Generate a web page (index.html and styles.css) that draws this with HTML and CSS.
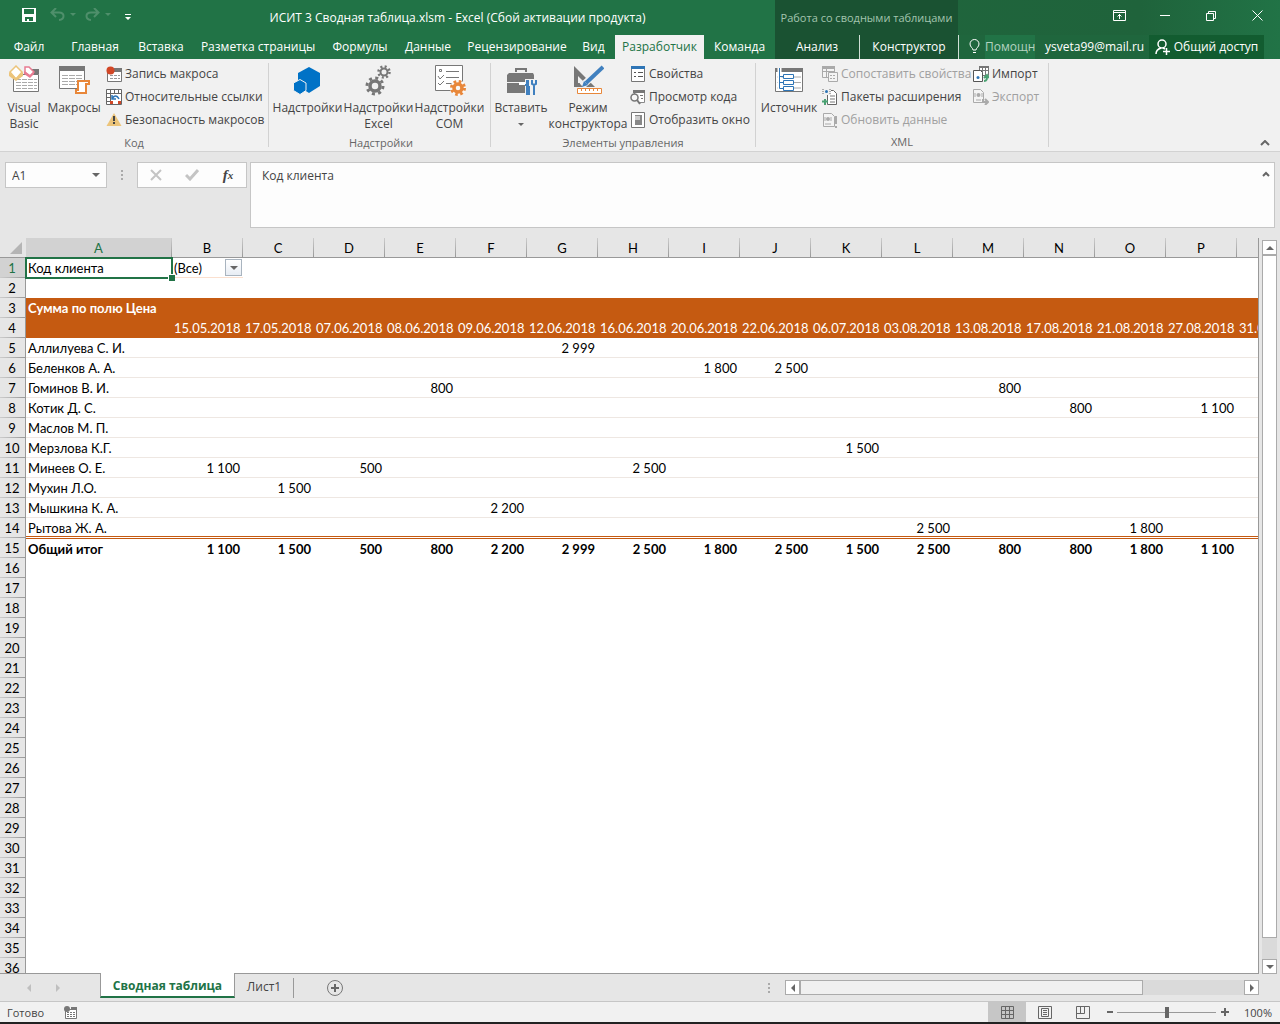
FILE: index.html
```html
<!DOCTYPE html>
<html lang="ru">
<head>
  <meta charset="utf-8">
  <title>ИСИТ 3 Сводная таблица.xlsm - Excel</title>
  <link rel="stylesheet" href="styles.css">
</head>
<body>
  <header class="titlebar">
    <div class="quick">
      <button class="icon-btn save" aria-label="Сохранить">
        <svg width="14" height="14" viewBox="0 0 14 14"><path fill="#fff" fill-rule="evenodd" d="M0 0h14v14H0zM2 1v5h10V1zM3 9v4h2v-2h2v2h4V9z"/></svg>
      </button>
      <button class="icon-btn undo" aria-label="Отменить">
        <svg width="26" height="14" viewBox="0 0 26 14"><path fill="none" stroke="#4f8f6b" stroke-width="2" d="M6 0 1.500 4.500 6 9M2 4.500h7c6 0 6 7 0 7.500"/><path fill="#4f8f6b" d="M20 5h6l-3 3z"/></svg>
      </button>
      <button class="icon-btn redo" aria-label="Вернуть">
        <svg width="26" height="14" viewBox="0 0 26 14"><path fill="none" stroke="#4f8f6b" stroke-width="2" d="M9 0l4.500 4.500L9 9M13 4.500H6c-6 0-6 7 0 7.500"/><path fill="#4f8f6b" d="M20 5h6l-3 3z"/></svg>
      </button>
      <button class="icon-btn more" aria-label="Настройка панели">
        <svg width="6" height="7" viewBox="0 0 6 7"><path fill="#fff" d="M0 0h6v1H0zM0 3h6L3 6z"/></svg>
      </button>
    </div>
    <h1>ИСИТ 3 Сводная таблица.xlsm - Excel (Сбой активации продукта)</h1>
    <div class="context-title">Работа со сводными таблицами</div>
    <div class="window-buttons">
      <button class="icon-btn" aria-label="Параметры ленты">
        <svg width="13" height="11" viewBox="0 0 13 11"><path fill="none" stroke="#fff" d="M.5.5h12v10H.5zM0 2.500h13M6.500 9V4M4.500 6.500l2-2 2 2"/></svg>
      </button>
      <button class="icon-btn" aria-label="Свернуть">
        <svg width="11" height="11" viewBox="0 0 11 11"><path stroke="#fff" d="M0 5.500h10"/></svg>
      </button>
      <button class="icon-btn" aria-label="Восстановить">
        <svg width="10" height="10" viewBox="0 0 10 10"><path fill="none" stroke="#fff" d="M.5 2.500h7v7h-7zM2.500 2V.5h7v7H8"/></svg>
      </button>
      <button class="icon-btn" aria-label="Закрыть">
        <svg width="11" height="11" viewBox="0 0 11 11"><path stroke="#fff" d="M.5.5l10 10M10.500.5l-10 10"/></svg>
      </button>
    </div>
  </header>

  <nav class="tabs">
    <button>Файл</button>
    <button>Главная</button>
    <button>Вставка</button>
    <button>Разметка страницы</button>
    <button>Формулы</button>
    <button>Данные</button>
    <button>Рецензирование</button>
    <button>Вид</button>
    <button class="active">Разработчик</button>
    <button>Команда</button>
    <button class="context">Анализ</button>
    <button class="context">Конструктор</button>
    <label class="tell-me">
      <svg width="12" height="16" viewBox="0 0 12 16"><path fill="none" stroke="#fff" d="M4 11c0-2-3-3-3-6a4.500 4.500 0 0 1 9 0c0 3-3 4-3 6zM4 13.500h3"/></svg>
      <input type="text" placeholder="Помощник">
    </label>
    <a href="#" class="account">ysveta99@mail.ru</a>
    <button class="share">
      <svg width="15" height="16" viewBox="0 0 15 16"><circle cx="7" cy="5" r="4" fill="none" stroke="#fff" stroke-width="1.500"/><path fill="none" stroke="#fff" stroke-width="1.500" d="M1 15c0-3 2-5 5-6M8 9l2 1M8 12.500h7M11.500 9v7"/></svg>
      Общий доступ
    </button>
  </nav>

  <section class="ribbon">
    <div class="group group-code">
      <div class="tools">
        <button class="big">
          <svg width="32" height="32" viewBox="0 0 32 32"><path fill="#fff" stroke="#777" d="M5.500 10.500h25v17h-25z"/><path fill="#777" d="M24 5h7v5h-7z"/><path stroke="#aaa" stroke-dasharray="5 1" d="M8 15.500h21M8 18.500h21M8 21.500h21M8 24.500h21"/><path fill="#fff" stroke="#ecc47a" stroke-width="1.500" d="M8 2l6 6-6 7-6-7z"/><path fill="#ecc47a" d="M1 8l7 6 7-6v4l-7 5-7-5z"/><path fill="#fff" stroke="#e87b91" stroke-width="1.500" d="M17 3h4l5 5-4 4-5-4z"/><path fill="#e87b91" d="M16 7l6 4 4-4v3l-4 4-6-4z"/></svg>
          <span>Visual<br>Basic</span>
        </button>
        <button class="big">
          <svg width="32" height="32" viewBox="0 0 32 32"><path fill="#fff" stroke="#777" d="M1.500 2.500h25v22h-25z"/><path fill="#777" d="M1 2h26v5H1z"/><path stroke="#aaa" stroke-dasharray="6 1" d="M4 11.500h20M4 14.500h20M4 17.500h20M4 20.500h20"/><path fill="#fff" stroke="#e8873a" stroke-width="2" d="M20 17h11v3h-3v9H18v-3h2z"/></svg>
          <span>Макросы</span>
        </button>
        <div class="stack">
          <button class="small"><svg width="16" height="16" viewBox="0 0 16 16"><path fill="#fff" stroke="#777" d="M1.500 4.500h14v11h-14z"/><path fill="#777" d="M8 2h8v4H8z"/><path stroke="#999" stroke-dasharray="3 1" d="M4 9.500h10M4 12.500h10"/><circle cx="4.500" cy="4.500" r="4" fill="#d24726"/></svg>Запись макроса</button>
          <button class="small"><svg width="16" height="16" viewBox="0 0 16 16"><path fill="#fff" stroke="#666" d="M.5.5h15v15H.5zM0 4.500h16M4.500 0v16M8.500 0v4M12.500 0v4M0 8.500h4M0 12.500h4"/><path fill="#fff" d="M5 5h10v7H5z"/><path fill="#d24726" d="M4 12h3v3H4zM12 12h3v3h-3z"/><path fill="none" stroke="#2e75b6" stroke-width="1.500" d="M6 6v4h4M6 10c2-4 5-4 7 0"/></svg>Относительные ссылки</button>
          <button class="small"><svg width="16" height="16" viewBox="0 0 16 16"><path fill="#ecc47a" d="M8 1l7.500 13H.5z"/><path fill="#444" d="M7 4h2v5H7zM7 10h2v2H7z"/></svg>Безопасность макросов</button>
        </div>
      </div>
      <h2>Код</h2>
    </div>

    <div class="group group-addins">
      <div class="tools">
        <button class="big">
          <svg width="32" height="32" viewBox="0 0 32 32"><path fill="#0072c6" d="M17 3l11 6v13l-11 7-11-7V9z"/><path fill="#0072c6" stroke="#f1f1f1" d="M8 15.500l6 3.500v7.500l-6 4-6.500-4V19z"/></svg>
          <span>Надстройки</span>
        </button>
        <button class="big">
          <svg width="32" height="32" viewBox="0 0 32 32"><g fill="none" stroke="#777"><circle cx="12" cy="22" r="5" stroke-width="3.500"/><circle cx="12" cy="22" r="8" stroke-width="3" stroke-dasharray="3 3.280"/><circle cx="21" cy="8" r="3.500" stroke-width="2"/><circle cx="21" cy="8" r="5.500" stroke-width="2.500" stroke-dasharray="2 2.320"/></g></svg>
          <span>Надстройки<br>Excel</span>
        </button>
        <button class="big">
          <svg width="32" height="32" viewBox="0 0 32 32"><path fill="#fff" stroke="#777" d="M1.500 1.500h27v25h-27z"/><path fill="none" stroke="#777" d="M5.500 5.500h2v2h-2zM12 7.500h13M12 13.500h13M12 19.500h6M4 12l2 3 4-4M4 19l2 2 4-4"/><circle cx="24" cy="24" r="8" fill="#f8f8f8"/><g fill="none" stroke="#e8873a"><circle cx="24" cy="24" r="4" stroke-width="3.500"/><circle cx="24" cy="24" r="6.500" stroke-width="3" stroke-dasharray="2.600 2.500"/></g></svg>
          <span>Надстройки<br>COM</span>
        </button>
      </div>
      <h2>Надстройки</h2>
    </div>

    <div class="group group-controls">
      <div class="tools">
        <button class="big">
          <svg width="32" height="32" viewBox="0 0 32 32"><path fill="none" stroke="#777" stroke-width="2" d="M11 8V5h10v3"/><path fill="#777" d="M4 9h24l1 2v7H2v-7zM2 19h13v2h5v-2h9v10H2z"/><path fill="#fff" d="M14 18h6v3h-6z"/><path fill="#f1f1f1" d="M20 15h12v17H20z"/><path fill="#777" d="M20 11h9v4h-9z"/><path fill="#4080bf" d="M21 16h3v6h1v9h-4v-9h-1v-2h1z"/><path fill="none" stroke="#4080bf" stroke-width="2" d="M27 16v4l2 1 2-1v-4M29 20v11"/></svg>
          <span>Вставить<br><i class="caret"></i></span>
        </button>
        <button class="big">
          <svg width="32" height="32" viewBox="0 0 32 32"><path fill="#777" fill-rule="evenodd" d="M2 2l21 21H2zM6 12v7h7z"/><path stroke="#f1f1f1" stroke-width="7" d="M10 22L30 4"/><path stroke="#4080bf" stroke-width="4" d="M14 19L31 3"/><path fill="#4080bf" d="M10 23l2-6 4 4z"/><path fill="#fff" stroke="#e8873a" d="M5.500 24.500h24v5h-24zM9.500 25v2M13.500 25v2M17.500 25v2M21.500 25v2M25.500 25v2"/></svg>
          <span>Режим<br>конструктора</span>
        </button>
        <div class="stack">
          <button class="small"><svg width="16" height="16" viewBox="0 0 16 16"><path fill="#fff" stroke="#777" d="M1.500.5h13v15h-13z"/><path fill="#2e75b6" d="M1 0h14v3H1z"/><path fill="none" stroke="#555" d="M4 6.500h2M4 10.500h2M8 6.500h5M8 10.500h5"/></svg>Свойства</button>
          <button class="small"><svg width="16" height="16" viewBox="0 0 16 16"><path fill="#fff" stroke="#888" d="M4.500 1.500h10v12h-10z"/><path fill="#777" d="M3 1h12v3H3z"/><path fill="#f1f1f1" d="M0 5h9v9H0z"/><path stroke="#777" d="M10 6.500h3M11 9.500h2"/><circle cx="4.500" cy="8.500" r="3.500" fill="#f8f8f8" stroke="#777" stroke-width="1.500"/><path stroke="#777" stroke-width="2" d="M7 11l3 4"/></svg>Просмотр кода</button>
          <button class="small"><svg width="16" height="16" viewBox="0 0 16 16"><path fill="#fff" stroke="#777" d="M1.500.5h13v15h-13z"/><path fill="#888" d="M5 3h7v10H5z"/><path fill="#ccc" d="M5 4h5v4H5z"/></svg>Отобразить окно</button>
        </div>
      </div>
      <h2>Элементы управления</h2>
    </div>

    <div class="group group-xml">
      <div class="tools">
        <button class="big">
          <svg width="32" height="32" viewBox="0 0 32 32"><path fill="#fff" stroke="#777" d="M2.500 4.500h27v23h-27z"/><path fill="#777" d="M2 4h28v4H2z"/><path stroke="#aaa" d="M4 13h24M4 18.500h24M4 24h24"/><path stroke="#fff" stroke-width="4" d="M6.500 4v23"/><path fill="#fff" stroke="#2e75b6" d="M6.500 4v20.500H10M6.500 12.500H10M6.500 18.500H10M10.500 10.500h10v4h-10zM10.500 16.500h10v4h-10zM10.500 22.500h10v4h-10z"/></svg>
          <span>Источник</span>
        </button>
        <div class="stack stack-wide">
          <button class="small" disabled><svg width="16" height="16" viewBox="0 0 16 16"><path fill="#f4f4f4" stroke="#aaa" d="M.5.5h12v11H.5zM0 5.500h12M4.500 3v8"/><path fill="#aaa" d="M0 0h13v3H0z"/><path fill="#f4f4f4" stroke="#aaa" d="M6.500 6.500h9v9h-9z"/><path stroke="#aaa" stroke-dasharray="2 1" d="M8 9.500h6M8 12.500h6"/></svg>Сопоставить свойства</button>
          <button class="small"><svg width="16" height="16" viewBox="0 0 16 16"><path fill="#fff" stroke="#666" d="M5.500 1.500h6l3 3v11h-9z"/><path stroke="#777" d="M8 7h5M8 10h5M8 13h5"/><path fill="#f1f1f1" d="M0 0h9v6H0z"/><circle cx="4.500" cy="2.500" r="1.500" fill="#2e75b6"/><path fill="none" stroke="#666" stroke-dasharray="1 1" d="M1 0v5M8 0v5"/><path stroke="#4ba173" stroke-width="2" d="M0 12.500h6M3 10v6"/></svg>Пакеты расширения</button>
          <button class="small" disabled><svg width="16" height="16" viewBox="0 0 16 16"><path fill="#f4f4f4" stroke="#aaa" d="M1.500 1.500h8l3 3v10h-11z"/><circle cx="6" cy="7" r="2" fill="#aaa"/><path fill="none" stroke="#aaa" d="M3 5v4M9 5v4M3 12h6"/><path stroke="#aaa" stroke-width="2" d="M14 4v8M14 14v2"/></svg>Обновить данные</button>
        </div>
        <div class="stack">
          <button class="small"><svg width="16" height="16" viewBox="0 0 16 16"><path fill="#fff" stroke="#777" d="M6.500.5h9v9h-9zM6 4.500h10M9.500 1v8M12.500 1v8"/><path fill="#777" d="M6 0h10v2H6z"/><path fill="#fff" stroke="#555" d="M.5 4.500h7l2 2v9h-9z"/><circle cx="5" cy="11.500" r="1.500" fill="#2e75b6"/><path fill="none" stroke="#4ba173" stroke-width="2" d="M11 15c3 0 3-2 3-5M11 12l3-3 2 3"/></svg>Импорт</button>
          <button class="small" disabled><svg width="16" height="16" viewBox="0 0 16 16"><path fill="#f4f4f4" stroke="#aaa" d="M.5.5h7l3 3v10H.5z"/><circle cx="5.500" cy="6" r="2" fill="#aaa"/><path fill="none" stroke="#aaa" d="M2 4v4M9 4v4M3 11h5"/><path fill="none" stroke="#aaa" stroke-width="2" d="M10 10v3h5M12 10l3 3-3 3"/></svg>Экспорт</button>
        </div>
      </div>
      <h2>XML</h2>
    </div>
    <button class="icon-btn collapse" aria-label="Свернуть ленту">
      <svg width="10" height="6" viewBox="0 0 10 6"><path fill="none" stroke="#666" stroke-width="2" d="M1 5l4-4 4 4"/></svg>
    </button>
  </section>

  <section class="formula-bar">
    <div class="name-box">
      <input type="text" value="A1" aria-label="Имя">
      <button class="icon-btn" aria-label="Список имён"><i class="caret"></i></button>
    </div>
    <i class="dots"></i>
    <div class="formula-buttons">
      <button class="icon-btn" aria-label="Отмена"><svg width="12" height="12" viewBox="0 0 12 12"><path stroke="#c4c4c4" stroke-width="2" d="M1 1l10 10M11 1L1 11"/></svg></button>
      <button class="icon-btn" aria-label="Ввод"><svg width="14" height="12" viewBox="0 0 14 12"><path fill="none" stroke="#c4c4c4" stroke-width="3" d="M1 6l4 4 8-9"/></svg></button>
      <button class="icon-btn fx" aria-label="Вставить функцию"><i>f</i><sub>x</sub></button>
    </div>
    <div class="formula-box">
      <textarea aria-label="Строка формул">Код клиента</textarea>
      <button class="icon-btn" aria-label="Свернуть строку формул"><svg width="8" height="6" viewBox="0 0 8 6"><path fill="none" stroke="#666" stroke-width="2" d="M1 5l3-3 3 3"/></svg></button>
    </div>
  </section>

  <main class="workspace">
    <div class="sheet">
      <table id="grid"></table>
    </div>
    <div class="vscroll">
      <button aria-label="Вверх"><i class="arrow up"></i></button>
      <div class="thumb"></div>
      <button aria-label="Вниз"><i class="arrow down"></i></button>
    </div>
  </main>

  <div class="sheet-bar">
    <div class="sheet-nav">
      <i class="arrow left"></i>
      <i class="arrow right"></i>
    </div>
    <button class="sheet-tab active">Сводная таблица</button>
    <button class="sheet-tab">Лист1</button>
    <button class="icon-btn add" aria-label="Новый лист">
      <svg width="16" height="16" viewBox="0 0 16 16"><circle cx="8" cy="8" r="7.500" fill="none" stroke="#777"/><path stroke="#666" stroke-width="2" d="M4 8h8M8 4v8"/></svg>
    </button>
    <i class="dots"></i>
    <div class="hscroll">
      <button aria-label="Влево"><i class="arrow left"></i></button>
      <div class="thumb"></div>
      <button aria-label="Вправо"><i class="arrow right"></i></button>
    </div>
  </div>

  <footer class="status">
    <span class="ready">Готово</span>
    <svg width="13" height="13" viewBox="0 0 13 13"><path fill="#fff" stroke="#777" d="M1.500 3.500h11v9h-11z"/><path fill="#777" d="M7 1h6v3H7z"/><path stroke="#777" stroke-dasharray="2 1" d="M3 6.500h8M3 8.500h8M3 10.500h8"/><circle cx="3" cy="3" r="3" fill="#777"/></svg>
    <div class="views">
      <button class="active" aria-label="Обычный"><svg width="13" height="13" viewBox="0 0 13 13"><path fill="none" stroke="#666" d="M.5.5h12v12H.5zM4.500 0v13M8.500 0v13M0 4.500h13M0 8.500h13"/></svg></button>
      <button aria-label="Разметка страницы"><svg width="14" height="13" viewBox="0 0 14 13"><path fill="none" stroke="#666" d="M.5.5h13v12H.5zM3.500 2.500h7v8h-7zM5 4.500h4M5 6.500h4M5 8.500h4"/></svg></button>
      <button aria-label="Страничный"><svg width="14" height="13" viewBox="0 0 14 13"><path fill="none" stroke="#666" d="M.5.5h13v12H.5zM.5 7.500h8V0M4.500 0v7"/></svg></button>
    </div>
    <button class="icon-btn zoom-btn" aria-label="Уменьшить"><svg width="8" height="8" viewBox="0 0 8 8"><path stroke="#666" stroke-width="2" d="M1 4h6"/></svg></button>
    <input type="range" min="0" max="200" value="100" aria-label="Масштаб">
    <button class="icon-btn zoom-btn" aria-label="Увеличить"><svg width="8" height="8" viewBox="0 0 8 8"><path stroke="#666" stroke-width="2" d="M0 4h8M4 0v8"/></svg></button>
    <span class="percent">100%</span>
  </footer>
  <script src="script.js"></script>
</body>
</html>
```
FILE: styles.css
```css
* {
  box-sizing: border-box;
}
body {
  margin: 0;
  height: 100vh;
  display: flex;
  flex-direction: column;
  overflow: hidden;
  background: #e6e6e6;
  border-bottom: 2px solid #222;
  font: 12px "Open Sans", "Noto Sans", sans-serif;
  color: #444;
}
button, input, textarea {
  font: inherit;
  color: inherit;
  background: none;
  border: none;
  padding: 0;
  margin: 0;
  outline: none;
  white-space: nowrap;
}
svg {
  display: block;
  flex: none;
}
.icon-btn {
  display: flex;
  align-items: center;
  justify-content: center;
}
.caret {
  display: inline-block;
  border: 4px solid transparent;
  border-top-color: #666;
  border-bottom: none;
}

/* title bar and tabs */
.titlebar {
  display: grid;
  grid-template-columns: 140px 635px 183px 1fr;
  height: 35px;
  color: #fff;
  background: linear-gradient(to right, #217346 775px, #1f663d 775px, #1f633b 1140px, #217346);
}
.quick {
  display: flex;
  align-items: center;
  padding: 0 0 6px 22px;
}
.quick .undo {
  margin-left: 14px;
}
.quick .redo {
  margin-left: 9px;
}
.quick .more {
  margin: 4px 0 0 14px;
}
h1 {
  margin: 0;
  font-size: 12px;
  font-weight: normal;
  line-height: 36px;
  text-align: center;
  white-space: nowrap;
}
.context-title {
  background: #1a5232;
  color: #a3c5af;
  font-size: 11px;
  line-height: 36px;
  text-align: center;
  white-space: nowrap;
}
.window-buttons {
  display: flex;
  justify-content: flex-end;
  padding: 0 0 5px;
}
.window-buttons button {
  width: 46px;
}
.tabs {
  display: grid;
  grid-template-columns: 58px 74px 58px 136px 68px 68px 110px 43px 89px 71px 85px 99px 77px 1fr 115px 16px;
  height: 24px;
  color: #fff;
  background: linear-gradient(to right, #217346 775px, #1f663d 775px, #1f663d 1140px, #217346);
}
.tabs button {
  padding-bottom: 1px;
}
.tabs .active {
  color: #217346;
  background: #f1f1f1;
}
.tabs .context {
  background: #1a5232;
  border-right: 1px solid #d0dfd6;
}
.tell-me {
  display: flex;
  align-items: center;
  gap: 4px;
  padding-left: 10px;
}
.tell-me input {
  width: 50px;
  height: 24px;
  padding-bottom: 1px;
  background: #217346;
}
.tell-me input::placeholder {
  color: #b5d2c0;
}
.account {
  color: #fff;
  text-decoration: none;
  line-height: 23px;
  padding-left: 9px;
}
.share {
  display: flex;
  align-items: center;
  justify-content: center;
  gap: 4px;
  background: #125c30;
}

/* ribbon */
.ribbon {
  display: flex;
  height: 93px;
  background: #f1f1f1;
  border-bottom: 1px solid #d2d2d2;
}
.group {
  display: flex;
  flex-direction: column;
  margin: 4px 0;
  border-right: 1px solid #d2d2d2;
}
.group-code {
  width: 269px;
}
.group-addins {
  width: 222px;
  padding-left: 3px;
}
.group-controls {
  width: 265px;
}
.group-xml {
  width: 293px;
}
.group h2 {
  margin: 0;
  font-size: 11px;
  font-weight: normal;
  line-height: 16px;
  text-align: center;
  color: #666;
}
.tools {
  display: flex;
  height: 72px;
  margin: -1px 0 3px;
}
.big {
  display: flex;
  flex-direction: column;
  align-items: center;
  width: 71px;
  padding-top: 2px;
  line-height: 16px;
}
.big span {
  margin-top: 4px;
}
.big .caret {
  border-width: 3px;
  border-bottom: none;
  vertical-align: middle;
}
.group-code .big {
  width: 48px;
}
.group-code .big + .big {
  width: 52px;
}
.group-code .stack {
  margin-left: 6px;
}
.group-controls .big {
  width: 60px;
}
.group-controls .big + .big {
  width: 74px;
}
.group-controls .stack {
  margin-left: 5px;
}
.group-xml .big {
  width: 66px;
}
.stack-wide {
  width: 151px;
}
.small {
  display: flex;
  align-items: center;
  gap: 3px;
  height: 23px;
}
.small:disabled {
  color: #a0a0a0;
}
.collapse {
  align-self: flex-end;
  margin: 0 10px 5px auto;
}

/* formula bar */
.formula-bar {
  display: flex;
  align-items: flex-start;
  padding: 10px 5px;
  height: 86px;
}
.name-box, .formula-buttons, .formula-box {
  display: flex;
  background: #fdfdfd;
  border: 1px solid #c6c6c6;
  height: 26px;
}
.name-box {
  width: 102px;
}
.name-box input {
  width: 86px;
  padding-left: 6px;
}
.dots {
  width: 2px;
  height: 10px;
  background: repeating-linear-gradient(#aaa 0 2px, transparent 2px 4px);
}
.formula-bar .dots {
  margin: 8px 14px 0;
}
.formula-buttons {
  width: 110px;
  margin-right: 3px;
}
.formula-buttons button {
  flex: 1;
}
.fx {
  font: bold 15px "Liberation Serif", serif;
}
.fx sub {
  font-size: 11px;
  font-style: italic;
}
.formula-box {
  flex: 1;
  height: 66px;
}
.formula-box textarea {
  flex: 1;
  resize: none;
  padding: 4px 11px;
}
.formula-box button {
  width: 16px;
  height: 22px;
}

/* worksheet */
.workspace {
  flex: 1;
  display: flex;
  min-height: 0;
}
.sheet {
  flex: 1;
  min-width: 0;
  overflow: hidden;
  background: linear-gradient(#e6e6e6 19px, #fff 19px);
  border-right: 1px solid #999;
  border-bottom: 1px solid #999;
}
table {
  table-layout: fixed;
  width: 0;
  border-collapse: separate;
  border-spacing: 0;
  font: 13px Lato, "Open Sans", sans-serif;
  color: #000;
}
td, th {
  height: 20px;
  padding: 0 3px 0 2px;
  line-height: 18px;
  white-space: nowrap;
  text-align: right;
  font-weight: normal;
}
thead th {
  background: linear-gradient(#ccc, #999) right / 1px 100% no-repeat #e6e6e6;
  border-bottom: 1px solid #999;
  text-align: center;
}
thead th.selected {
  background-color: #d2d2d2;
  border-bottom-color: #217346;
  color: #217346;
}
tbody th {
  background: linear-gradient(to right, #ccc, #999) bottom / 100% 1px no-repeat #e6e6e6;
  border-right: 1px solid #999;
  text-align: center;
}
tbody th.selected {
  background-color: #d2d2d2;
  color: #217346;
}
thead th.corner {
  position: relative;
  background: #e6e6e6;
}
.corner::after {
  content: "";
  position: absolute;
  right: 4px;
  bottom: 3px;
  border: 6px solid transparent;
  border-right-color: #b5b5b5;
  border-bottom-color: #b5b5b5;
}
td.label {
  text-align: left;
}
.band td {
  background: #c55a11;
  color: #fff;
}
.data td {
  border-bottom: 1px solid #eee7e2;
}
/* double rule above the totals: one line on each side of the row edge */
.last td {
  background: linear-gradient(#c55a11, #c55a11) 0 18px / 100% 1px no-repeat;
}
.total td {
  border-top: 1px solid #c55a11;
}
.strong td {
  font-weight: bold;
}
td.cursor {
  position: relative;
}
.cursor::before {
  content: "";
  position: absolute;
  inset: -1px;
  border: 2px solid #217346;
}
.cursor::after {
  content: "";
  position: absolute;
  right: -3px;
  bottom: -3px;
  width: 6px;
  height: 6px;
  background: #217346;
  border: 1px solid #fff;
  border-right: none;
  border-bottom: none;
}
td.filter-cell {
  padding-right: 1px;
  border-bottom: 1px solid #fbe0cf;
}
.filter {
  display: flex;
  align-items: center;
  justify-content: space-between;
}
.filter button {
  width: 17px;
  height: 17px;
  border: 1px solid #a9b4bf;
  background: linear-gradient(#fff, #e8edf4);
  display: flex;
  align-items: center;
  justify-content: center;
}

/* scrollbars */
.arrow {
  display: block;
  border: 4px solid transparent;
}
.up {
  border-top: none;
  border-bottom-color: #666;
}
.down {
  border-bottom: none;
  border-top-color: #666;
}
.left {
  border-left: none;
  border-right-color: #666;
}
.right {
  border-right: none;
  border-left-color: #666;
}
.vscroll, .hscroll {
  display: flex;
  background: #dadada;
}
.vscroll {
  flex-direction: column;
  width: 15px;
  margin: 2px 3px 0;
}
.vscroll button, .hscroll button {
  width: 15px;
  height: 15px;
  background: #fff;
  border: 1px solid #ababab;
  display: flex;
  align-items: center;
  justify-content: center;
}
.thumb {
  border: 1px solid #ababab;
}
.vscroll .thumb {
  flex: 0 1 683px;
  margin-bottom: auto;
  background: #fff;
}
.hscroll .thumb {
  width: 343px;
  margin-right: auto;
  background: #f0f0f0;
}

/* sheet tabs */
.sheet-bar {
  display: flex;
  align-items: center;
  height: 28px;
  border-bottom: 1px solid #c6c6c6;
}
.sheet-nav {
  display: flex;
  gap: 25px;
  width: 100px;
  padding-left: 27px;
  opacity: 0.3;
}
.sheet-tab {
  width: 59px;
  height: 20px;
  padding-bottom: 2px;
  border-right: 1px solid #999;
}
.sheet-tab.active {
  align-self: flex-start;
  width: 135px;
  height: 25px;
  margin-top: -1px;
  padding: 2px 0 0;
  background: #fff;
  border-left: 1px solid #999;
  border-bottom: 2px solid #217346;
  color: #217346;
  font-weight: bold;
  position: relative;
}
.add {
  margin-left: 33px;
}
.sheet-bar .dots {
  margin-left: auto;
}
.hscroll {
  width: 474px;
  margin: 0 21px 0 15px;
}

/* status bar */
.status {
  display: flex;
  align-items: center;
  height: 20px;
  background: #f1f1f1;
  font-size: 11px;
}
.ready {
  width: 58px;
  padding-left: 7px;
  margin-right: 6px;
}
.views {
  display: flex;
  margin-left: auto;
  margin-right: 2px;
  height: 20px;
}
.views button {
  width: 38px;
  display: flex;
  align-items: center;
  justify-content: center;
}
.views .active {
  background: #c6c6c6;
}
.zoom-btn {
  width: 12px;
}
.status input {
  appearance: none;
  width: 99px;
  height: 12px;
  margin: 0 3px 0 1px;
  background: linear-gradient(#999, #999) center / 100% 1px no-repeat;
}
.status input::-webkit-slider-thumb {
  appearance: none;
  width: 4px;
  height: 11px;
  background: #666;
}
.percent {
  width: 49px;
  text-align: right;
  padding-right: 8px;
}
```
FILE: script.js
```js
const dates = ['15.05.2018', '17.05.2018', '07.06.2018', '08.06.2018', '09.06.2018', '12.06.2018',
  '16.06.2018', '20.06.2018', '22.06.2018', '06.07.2018', '03.08.2018', '13.08.2018',
  '17.08.2018', '21.08.2018', '27.08.2018', '31.08.2018'];
const letters = 'ABCDEFGHIJKLMNOP'.split('');
const rowCount = 36;

// column letter -> value for each client
const clients = [
  ['Аллилуева С. И.', { G: '2 999' }],
  ['Беленков А. А.', { I: '1 800', J: '2 500' }],
  ['Гоминов В. И.', { E: '800', M: '800' }],
  ['Котик Д. С.', { N: '800', P: '1 100' }],
  ['Маслов М. П.', {}],
  ['Мерзлова К.Г.', { K: '1 500' }],
  ['Минеев О. Е.', { B: '1 100', D: '500', H: '2 500' }],
  ['Мухин Л.О.', { C: '1 500' }],
  ['Мышкина К. А.', { F: '2 200' }],
  ['Рытова Ж. А.', { L: '2 500', O: '1 800' }],
];
const totals = ['1 100', '1 500', '500', '800', '2 200', '2 999', '2 500', '1 800', '2 500',
  '1 500', '2 500', '800', '800', '1 800', '1 100', ''];

function row(n, cls, label, values) {
  const cells = values.map(v => `<td>${v}</td>`).join('');
  return `<tr class="${cls}"><th>${n}</th><td class="label">${label}</td>${cells}</tr>`;
}

const blank = dates.map(() => '');
let html = '<colgroup><col style="width:26px"><col style="width:146px">' +
  dates.map(() => '<col style="width:71px">').join('') + '</colgroup>';

html += '<thead><tr><th class="corner"></th>' +
  letters.map(l => `<th class="${l === 'A' ? 'selected' : ''}">${l}</th>`).join('') +
  '<th></th></tr></thead><tbody>';

html += '<tr><th class="selected">1</th><td class="label cursor">Код клиента</td>' +
  '<td class="filter-cell"><div class="filter">(Все)<button aria-label="Фильтр"><i class="caret"></i></button></div></td>' +
  blank.slice(1).map(() => '<td></td>').join('') + '</tr>';
html += row(2, '', '', blank);
html += row(3, 'band strong', 'Сумма по полю Цена', blank);
html += row(4, 'band', '', dates);
clients.forEach(([name, sums], i) => {
  const last = i === clients.length - 1;
  const values = dates.map((d, c) => sums[letters[c + 1]] || '');
  html += row(i + 5, last ? 'last' : 'data', name, values);
});
html += row(15, 'total strong', 'Общий итог', totals);
for (let n = 16; n <= rowCount; n++) {
  html += row(n, '', '', blank);
}

document.getElementById('grid').innerHTML = html + '</tbody>';
```
